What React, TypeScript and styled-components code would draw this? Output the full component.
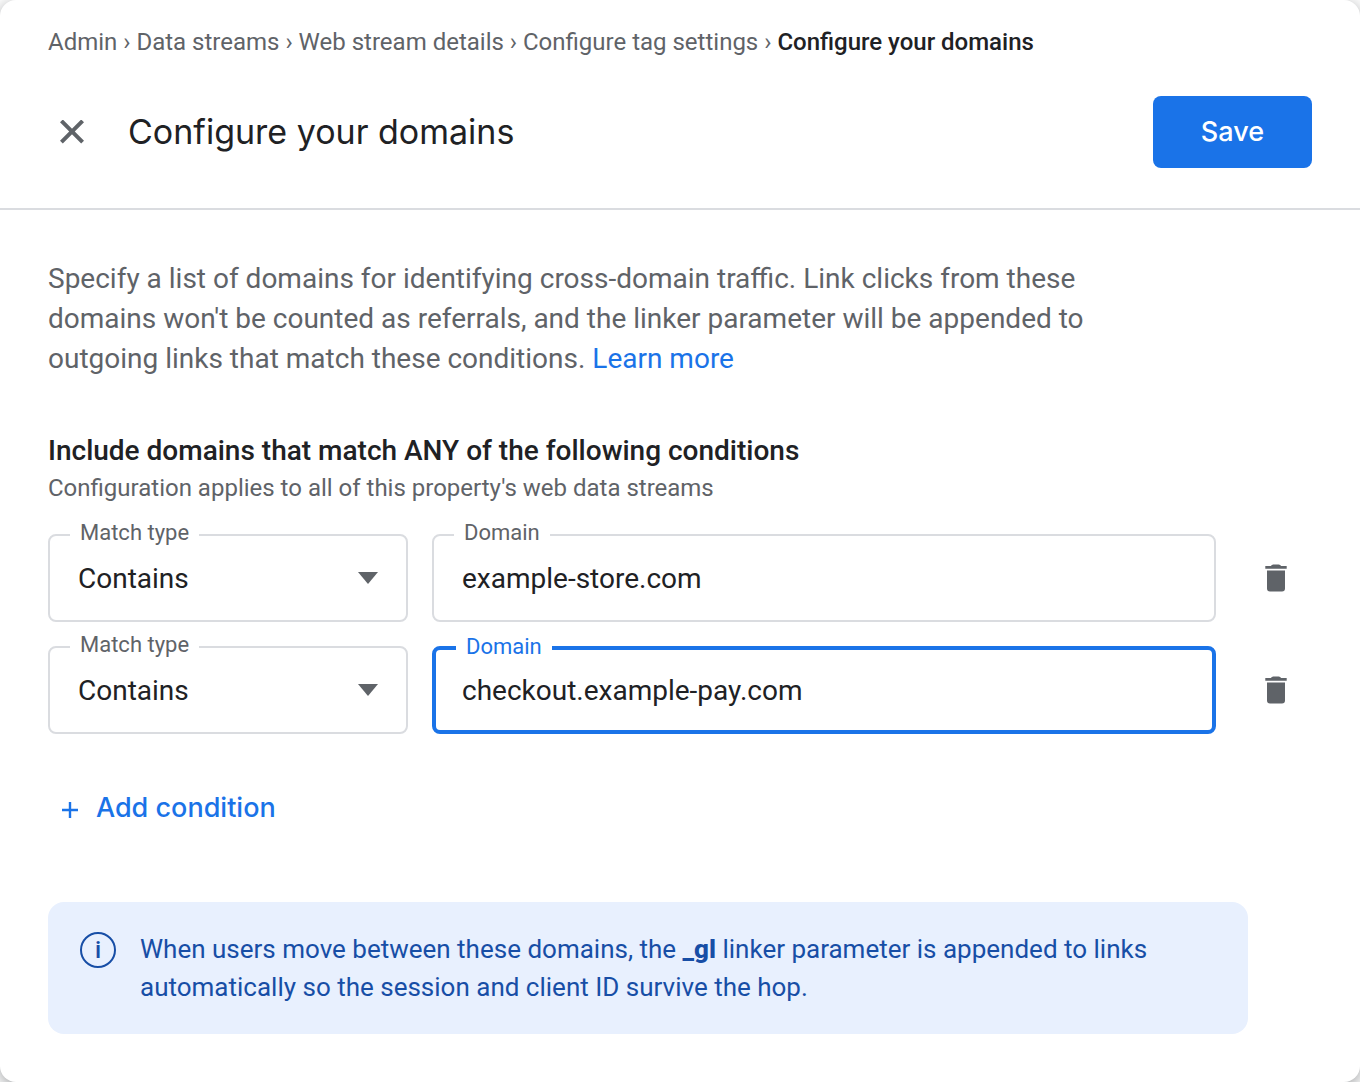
import React, { useId, useState } from 'react';
import styled, { createGlobalStyle, css } from 'styled-components';

const color = {
  ink: '#202124',
  muted: '#5f6368',
  line: '#dadce0',
  blue: '#1a73e8',
  navy: '#174ea6',
  tint: '#e8f0fe',
};
const display = '"Google Sans", Inter, sans-serif';

const GlobalStyle = createGlobalStyle`
  *, *::before, *::after { box-sizing: border-box; }
  body { margin: 0; background: #fff; color: ${color.ink}; font-family: Roboto, sans-serif; }
  button, input, select { font: inherit; color: inherit; }
`;

const Sheet = styled.main`
  min-height: 100vh;
  background: #fff;
  border-radius: 16px;
  box-shadow: 0 4px 16px rgba(60, 64, 67, 0.5);
`;

const Header = styled.header`
  display: flex;
  flex-direction: column;
  gap: 40px;
  padding: 28px 48px 40px;
  border-bottom: 2px solid ${color.line};
`;

const Crumbs = styled.nav`
  font-size: 24px;
  line-height: 28px;
  color: ${color.muted};
`;

const Crumb = styled.a`
  color: inherit;
  text-decoration: none;
`;

const CurrentCrumb = styled.span`
  color: ${color.ink};
  font-weight: 500;
`;

const TitleRow = styled.div`
  display: flex;
  align-items: center;
  gap: 32px;
`;

const Title = styled.h1`
  flex: 1;
  margin: 0;
  font: 400 34px/48px ${display};
`;

const IconButton = styled.button<{ $width: number; $height: number }>`
  display: flex;
  align-items: center;
  justify-content: center;
  width: ${(p) => p.$width}px;
  height: ${(p) => p.$height}px;
  padding: 0;
  border: 0;
  background: none;
  color: ${color.muted};
  cursor: pointer;
`;

const SaveButton = styled.button`
  height: 72px;
  padding: 0 48px;
  border: 0;
  border-radius: 8px;
  background: ${color.blue};
  color: #fff;
  font: 500 27px/40px ${display};
  cursor: pointer;
`;

const Body = styled.div`
  padding: 49px 48px 48px;
`;

const Intro = styled.p`
  max-width: 1100px;
  margin: 0 0 56px;
  font-size: 28px;
  line-height: 40px;
  color: ${color.muted};
`;

const Link = styled.a`
  color: ${color.blue};
  text-decoration: none;
`;

const SectionTitle = styled.h2`
  margin: 0 0 7px;
  font-size: 28px;
  font-weight: 500;
  line-height: 32px;
`;

const SectionNote = styled.p`
  margin: 0 0 32px;
  font-size: 24px;
  line-height: 28px;
  color: ${color.muted};
`;

const Conditions = styled.div`
  display: flex;
  flex-direction: column;
  gap: 24px;
`;

const ConditionRow = styled.div`
  display: grid;
  grid-template-columns: 360px 1fr 72px;
  align-items: center;
  gap: 24px;
`;

const Field = styled.div<{ $active?: boolean }>`
  position: relative;
  display: flex;
  height: 88px;
  border: ${(p) => (p.$active ? 4 : 2)}px solid ${(p) => (p.$active ? color.blue : color.line)};
  border-radius: 8px;
`;

const FieldLabel = styled.label<{ $active?: boolean }>`
  position: absolute;
  top: -17px;
  left: 20px;
  padding: 0 10px;
  background: #fff;
  font-size: 22px;
  line-height: 28px;
  color: ${(p) => (p.$active ? color.blue : color.muted)};
`;

const control = css<{ $active?: boolean }>`
  width: 100%;
  min-width: 0;
  padding: 0 ${(p) => (p.$active ? 26 : 28)}px;
  border: 0;
  outline: 0;
  border-radius: 8px;
  background: transparent;
  font-size: 28px;
`;

const TextInput = styled.input`
  ${control}
`;

const Select = styled.select`
  ${control}
  appearance: none;
  cursor: pointer;
`;

const Arrow = styled.svg`
  position: absolute;
  top: 36px;
  right: 28px;
  pointer-events: none;
`;

const AddButton = styled.button`
  display: flex;
  align-items: center;
  gap: 18px;
  margin: 54px 0 74px;
  padding: 0 14px;
  border: 0;
  background: none;
  color: ${color.blue};
  font: 500 27px/40px ${display};
  cursor: pointer;
`;

const Notice = styled.aside`
  display: flex;
  align-items: flex-start;
  gap: 24px;
  max-width: 1200px;
  padding: 28px 32px;
  border-radius: 16px;
  background: ${color.tint};
  color: ${color.navy};
`;

const InfoBadge = styled.span`
  display: flex;
  flex: none;
  align-items: center;
  justify-content: center;
  width: 36px;
  height: 36px;
  margin-top: 2px;
  border: 2px solid;
  border-radius: 50%;
  font-size: 24px;
  font-weight: 500;
  line-height: 32px;
`;

const NoticeText = styled.p`
  margin: 0;
  font-size: 26px;
  line-height: 38px;
`;

const Param = styled.b`
  font-weight: 800;
`;

const CloseIcon = () => (
  <svg width="24" height="24" viewBox="0 0 24 24" fill="none" stroke="currentColor" strokeWidth="4" aria-hidden="true">
    <path d="M1.4 .9 22.6 22.1M22.6 .9 1.4 22.1" />
  </svg>
);

const TrashIcon = () => (
  <svg width="22" height="28" viewBox="0 0 22 28" fill="currentColor" aria-hidden="true">
    <path d="M.3 2h5.6q.8-1.6 2.3-1.6h5.6q1.5 0 2.3 1.6h5.6v2.8H.3zM2 6.4h18v18.2q0 3-3 3H5q-3 0-3-3z" />
  </svg>
);

const PlusIcon = () => (
  <svg width="16" height="20" viewBox="0 0 16 20" stroke="currentColor" strokeWidth="2.4" aria-hidden="true">
    <path d="M8 4v16M0 12h16" />
  </svg>
);

type Condition = { match: string; domain: string };

type ConditionProps = {
  value: Condition;
  active: boolean;
  onFocus: () => void;
  onChange: (value: Condition) => void;
  onRemove: () => void;
};

function ConditionFields({ value, active, onFocus, onChange, onRemove }: ConditionProps) {
  const id = useId();
  return (
    <ConditionRow>
      <Field>
        <FieldLabel htmlFor={`${id}-match`}>Match type</FieldLabel>
        <Select
          id={`${id}-match`}
          value={value.match}
          onChange={(e) => onChange({ ...value, match: e.target.value })}
        >
          <option>Contains</option>
        </Select>
        <Arrow width="20" height="12" viewBox="0 0 20 12" fill={color.muted} aria-hidden="true">
          <path d="M0 0h20L10 12z" />
        </Arrow>
      </Field>
      <Field $active={active}>
        <FieldLabel htmlFor={`${id}-domain`} $active={active}>Domain</FieldLabel>
        <TextInput
          id={`${id}-domain`}
          type="text"
          $active={active}
          value={value.domain}
          onFocus={onFocus}
          onChange={(e) => onChange({ ...value, domain: e.target.value })}
        />
      </Field>
      <IconButton type="button" $width={72} $height={72} aria-label="Remove condition" onClick={onRemove}>
        <TrashIcon />
      </IconButton>
    </ConditionRow>
  );
}

const trail = ['Admin', 'Data streams', 'Web stream details', 'Configure tag settings'];

export default function App() {
  const [active, setActive] = useState(1);
  const [conditions, setConditions] = useState<Condition[]>([
    { match: 'Contains', domain: 'example-store.com' },
    { match: 'Contains', domain: 'checkout.example-pay.com' },
  ]);

  return (
    <>
      <GlobalStyle />
      <Sheet>
        <Header>
          <Crumbs aria-label="Breadcrumb">
            {trail.map((name) => (
              <React.Fragment key={name}>
                <Crumb href="#">{name}</Crumb>
                {' › '}
              </React.Fragment>
            ))}
            <CurrentCrumb aria-current="page">Configure your domains</CurrentCrumb>
          </Crumbs>
          <TitleRow>
            <IconButton type="button" $width={48} $height={48} aria-label="Close">
              <CloseIcon />
            </IconButton>
            <Title>Configure your domains</Title>
            <SaveButton type="button">Save</SaveButton>
          </TitleRow>
        </Header>
        <Body>
          <Intro>
            Specify a list of domains for identifying cross-domain traffic. Link clicks from these domains won't be
            counted as referrals, and the linker parameter will be appended to outgoing links that match these
            conditions. <Link href="#">Learn more</Link>
          </Intro>
          <SectionTitle>Include domains that match ANY of the following conditions</SectionTitle>
          <SectionNote>Configuration applies to all of this property's web data streams</SectionNote>
          <Conditions>
            {conditions.map((condition, i) => (
              <ConditionFields
                key={i}
                value={condition}
                active={active === i}
                onFocus={() => setActive(i)}
                onChange={(next) => setConditions(conditions.map((c, j) => (j === i ? next : c)))}
                onRemove={() => setConditions(conditions.filter((_, j) => j !== i))}
              />
            ))}
          </Conditions>
          <AddButton
            type="button"
            onClick={() => setConditions([...conditions, { match: 'Contains', domain: '' }])}
          >
            <PlusIcon />
            Add condition
          </AddButton>
          <Notice>
            <InfoBadge aria-hidden="true">i</InfoBadge>
            <NoticeText>
              When users move between these domains, the <Param>_gl</Param> linker parameter is appended to links
              automatically so the session and client ID survive the hop.
            </NoticeText>
          </Notice>
        </Body>
      </Sheet>
    </>
  );
}
